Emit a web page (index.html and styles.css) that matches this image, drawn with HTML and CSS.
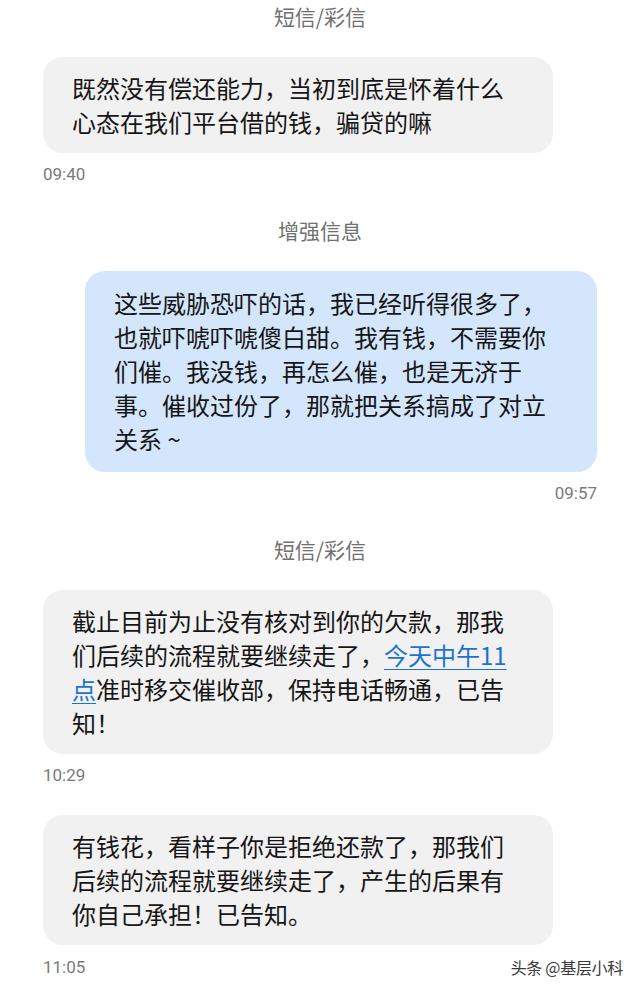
FILE: index.html
```html
<!DOCTYPE html>
<html lang="zh-CN">
<head>
<meta charset="utf-8">
<title>短信</title>
<link rel="stylesheet" href="styles.css">
</head>
<body>
<div class="thread">
  <div class="label">短信/彩信</div>
  <div class="bubble in">既然没有偿还能力，当初到底是怀着什么心态在我们平台借的钱，骗贷的嘛</div>
  <div class="time">09:40</div>

  <div class="label gap">增强信息</div>
  <div class="bubble out">这些威胁恐吓的话，我已经听得很多了，也就吓唬吓唬傻白甜。我有钱，不需要你们催。我没钱，再怎么催，也是无济于事。催收过份了，那就把关系搞成了对立关系 ~</div>
  <div class="time right">09:57</div>

  <div class="label gap">短信/彩信</div>
  <div class="bubble in">截止目前为止没有核对到你的欠款，那我们后续的流程就要继续走了，<span class="link">今天中午11</span><span class="link">点</span>准时移交催收部，保持电话畅通，已告知！</div>
  <div class="time">10:29</div>

  <div class="bubble in next">有钱花，看样子你是拒绝还款了，那我们后续的流程就要继续走了，产生的后果有你自己承担！已告知。</div>
  <div class="time last"><span>11:05</span><span class="mark">头条 @基层小科</span></div>
</div>
</body>
</html>
```
FILE: styles.css
```css
html, body {
  margin: 0;
  padding: 0;
  background: #ffffff;
}
body {
  font-family: "Noto Sans CJK SC", "Noto Sans", sans-serif;
  color: #161616;
}
.thread {
  display: flex;
  flex-direction: column;
  padding: 0 43px;
}
.label {
  font-size: 21px;
  line-height: 32px;
  height: 32px;
  text-align: center;
  color: #707070;
}
.label.gap {
  margin-top: 30px;
}
.bubble {
  font-size: 24px;
  line-height: 34px;
  padding: 14px 29px;
  border-radius: 20px;
  word-break: break-all;
}
.bubble.in {
  background: #f1f1f1;
  margin-top: 25px;
  margin-right: 44px;
}
.bubble.in.next {
  margin-top: 30px;
}
.bubble.out {
  background: #d4e6fc;
  margin-top: 25px;
  margin-left: 42px;
  padding-top: 15px;
  padding-bottom: 16px;
}
.link {
  color: #1a73d0;
  text-decoration: underline;
  text-underline-offset: 4px;
  text-decoration-thickness: 1px;
}
.time {
  font-family: Roboto, "Noto Sans", sans-serif;
  font-size: 17px;
  line-height: 20px;
  height: 20px;
  margin-top: 11px;
  color: #7a7a7a;
}
.time.right {
  text-align: right;
}
.time.last {
  display: flex;
  justify-content: space-between;
  align-items: center;
  margin-top: 12px;
  margin-right: -26px;
}
.mark {
  font-family: "Noto Sans CJK SC", sans-serif;
  font-size: 16px;
  color: #3a3a3a;
  text-shadow: 0 0 1px #fff, 0 0 2px #fff;
  letter-spacing: -0.3px;
}
```
